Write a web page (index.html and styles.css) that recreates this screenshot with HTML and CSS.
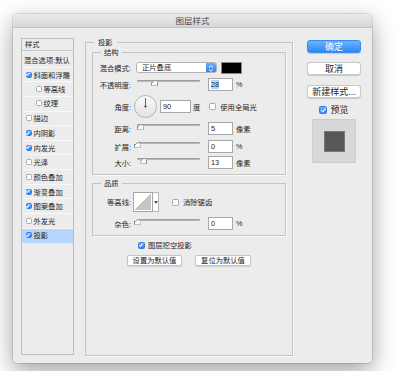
FILE: index.html
```html
<!DOCTYPE html>
<html lang="zh-CN">
<head>
  <meta charset="UTF-8">
  <title>图层样式</title>
  <link rel="stylesheet" href="styles.css">
</head>
<body>
  <div class="window">
    <div class="titlebar">图层样式</div>
    <div class="body">

      <!-- Style list -->
      <div class="list">
        <div class="list-head">样式</div>
        <div class="item item-first">混合选项:默认</div>
        <div class="item"><span class="cb on"></span>斜面和浮雕</div>
        <div class="item sub"><span class="cb"></span>等高线</div>
        <div class="item sub"><span class="cb"></span>纹理</div>
        <div class="item"><span class="cb"></span>描边</div>
        <div class="item"><span class="cb on"></span>内阴影</div>
        <div class="item"><span class="cb on"></span>内发光</div>
        <div class="item"><span class="cb"></span>光泽</div>
        <div class="item"><span class="cb"></span>颜色叠加</div>
        <div class="item"><span class="cb on"></span>渐变叠加</div>
        <div class="item"><span class="cb on"></span>图案叠加</div>
        <div class="item"><span class="cb"></span>外发光</div>
        <div class="item selected"><span class="cb on"></span>投影</div>
      </div>

      <!-- Drop shadow settings -->
      <fieldset class="group main">
        <legend>投影</legend>

        <fieldset class="group sub">
          <legend>结构</legend>
          <div class="row first">
            <span class="lbl">混合模式:</span>
            <div class="select">
              <span class="select-text">正片叠底</span>
              <span class="stepper">
                <svg width="10" height="11" viewBox="0 0 10 11"><path d="M3 4.5 L5 2.6 L7 4.5 M3 6.5 L5 8.4 L7 6.5" fill="none" stroke="#fff" stroke-width="1"/></svg>
              </span>
            </div>
            <span class="swatch"></span>
          </div>
          <div class="row">
            <span class="lbl">不透明度:</span>
            <div class="slider"><span class="thumb" style="left: 28%"></span></div>
            <span class="field"><span class="sel">28</span></span>
            <span class="unit">%</span>
          </div>
          <div class="row row-dial">
            <span class="lbl">角度:</span>
            <svg class="dial" width="23" height="23" viewBox="0 0 23 23">
              <defs>
                <linearGradient id="dialfill" x1="0" y1="0" x2="0" y2="1">
                  <stop offset="0" stop-color="#fbfbfb"/>
                  <stop offset="1" stop-color="#e2e2e2"/>
                </linearGradient>
              </defs>
              <circle cx="11.5" cy="11.5" r="11" fill="url(#dialfill)" stroke="#a3a3a3" stroke-width="0.8"/>
              <line x1="11.5" y1="11.5" x2="11.5" y2="3" stroke="#444" stroke-width="0.8"/>
              <circle cx="11.5" cy="11.5" r="1.1" fill="#333"/>
            </svg>
            <span class="field wide">90</span>
            <span class="unit unit-deg">度</span>
            <span class="cb big"></span>
            <span class="cb-label">使用全局光</span>
          </div>
          <div class="row">
            <span class="lbl">距离:</span>
            <div class="slider"><span class="thumb" style="left: 5%"></span></div>
            <span class="field">5</span>
            <span class="unit">像素</span>
          </div>
          <div class="row gap5">
            <span class="lbl">扩展:</span>
            <div class="slider"><span class="thumb" style="left: 0%"></span></div>
            <span class="field">0</span>
            <span class="unit">%</span>
          </div>
          <div class="row gap3">
            <span class="lbl">大小:</span>
            <div class="slider"><span class="thumb" style="left: 11%"></span></div>
            <span class="field">13</span>
            <span class="unit">像素</span>
          </div>
        </fieldset>

        <fieldset class="group sub quality">
          <legend>品质</legend>
          <div class="row first row-contour">
            <span class="lbl">等高线:</span>
            <div class="contour">
              <svg width="20" height="20" viewBox="0 0 20 20">
                <rect x="0.5" y="0.5" width="19" height="19" fill="#fff" stroke="#a6a6a6"/>
                <polygon points="2,18 18,2 18,18" fill="#c6c6c6"/>
                <line x1="2" y1="18" x2="18" y2="2" stroke="#9a9a9a" stroke-width="0.6"/>
              </svg>
              <span class="contour-drop">
                <svg width="4" height="3" viewBox="0 0 4 3"><polygon points="0,0 4,0 2,3" fill="#555"/></svg>
              </span>
            </div>
            <span class="cb big cb-anti"></span>
            <span class="cb-label">消除锯齿</span>
          </div>
          <div class="row gap5">
            <span class="lbl">杂色:</span>
            <div class="slider"><span class="thumb" style="left: 0%"></span></div>
            <span class="field">0</span>
            <span class="unit">%</span>
          </div>
        </fieldset>

        <div class="check-row">
          <span class="cb big on"></span>
          <span>图层挖空投影</span>
        </div>

        <div class="btn-row">
          <span class="small-btn">设置为默认值</span>
          <span class="small-btn wide-btn">复位为默认值</span>
        </div>
      </fieldset>

      <!-- Side buttons -->
      <div class="side">
        <div class="btn primary">确定</div>
        <div class="btn btn-cancel">取消</div>
        <div class="btn btn-new">新建样式...</div>
        <div class="preview-check">
          <span class="cb large on"></span>
          <span>预览</span>
        </div>
        <div class="preview">
          <div class="preview-square"></div>
        </div>
      </div>

    </div>
  </div>
</body>
</html>
```

FILE: styles.css
```css
/* General */
body {
  margin: 0;
  width: 417px;
  height: 371px;
  overflow: hidden;
  background: #fff;
  font-family: "Liberation Sans", "Noto Sans CJK SC", sans-serif;
  color: #252525;
}

.window {
  margin: 14px 0 0 13px;
  width: 359px;
  height: 349px;
  background: #ececec;
  border-radius: 4px;
  overflow: hidden;
  display: flex;
  flex-direction: column;
  box-shadow: 0 0 0 0.5px rgba(0, 0, 0, 0.22), 0 8px 24px rgba(0, 0, 0, 0.38);
}

.titlebar {
  height: 13px;
  border-bottom: 1px solid #c3c3c3;
  background: linear-gradient(#ebebeb, #d7d7d7);
  text-align: center;
  font-size: 8.5px;
  line-height: 14px;
  color: #4a4a4a;
}

.body {
  flex: 1;
  display: flex;
  align-items: flex-start;
  padding: 10px 11px 7px 8px;
}

/* Checkboxes */
.cb {
  flex: none;
  display: inline-flex;
  align-items: center;
  justify-content: center;
  width: 6px;
  height: 6px;
  box-sizing: border-box;
  border: 0.5px solid #a8a8a8;
  border-radius: 1.5px;
  background: #fff;
}

.cb.on {
  border-color: #2f7de6;
  background: linear-gradient(#69aafb, #2c82f6);
}

.cb.on::after {
  content: "";
  width: 1.2px;
  height: 2.6px;
  margin-top: -1px;
  border-right: 1px solid #fff;
  border-bottom: 1px solid #fff;
  transform: rotate(40deg);
}

.cb.big {
  width: 7px;
  height: 7px;
}

.cb.large {
  width: 8px;
  height: 8px;
}

.cb.large::after {
  width: 1.6px;
  height: 3.6px;
}

/* Style list */
.list {
  flex: none;
  width: 53px;
  height: 317px;
  box-sizing: border-box;
  border: 1px solid #bdbdbd;
  font-size: 7.3px;
}

.list-head {
  height: 11px;
  line-height: 11px;
  padding-left: 3px;
  border-bottom: 1px solid #c8c8c8;
}

.item {
  height: 14.64px;
  box-sizing: border-box;
  display: flex;
  align-items: center;
  gap: 2px;
  padding-left: 3.5px;
  border-bottom: 1px solid #f8f8f8;
  white-space: nowrap;
}

.item-first {
  height: 16.7px;
  padding-left: 2px;
  padding-top: 2px;
}

.item.sub {
  padding-left: 13.5px;
}

.item.selected {
  background: #b5d5fd;
  border-bottom-color: #b5d5fd;
}

/* Groups */
.group {
  margin: 0;
  min-width: 0;
  border: 1px solid #c4c4c4;
  box-shadow: 1px 1px 0 #f9f9f9;
}

.group legend {
  font-size: 7.3px;
  line-height: 9px;
  padding: 0 4px;
  margin-left: 2px;
}

.main {
  align-self: stretch;
  flex: none;
  width: 208px;
  box-sizing: border-box;
  margin-left: 11px;
  padding: 1px 6px 0 6px;
  font-size: 7.3px;
}

.sub {
  padding: 4px 0 5px 0;
}

.sub legend {
  margin-left: 8px;
  padding: 0 3px;
}

.quality {
  margin-top: 4px;
}

/* Rows */
.row {
  display: flex;
  align-items: center;
  height: 13px;
  margin-top: 4px;
  white-space: nowrap;
}

.row.first {
  margin-top: 0;
}

.row.gap5 {
  margin-top: 5px;
}

.row.gap3 {
  margin-top: 3px;
}

.row-dial {
  height: 23px;
}

.row-contour {
  height: 20px;
}

.lbl {
  flex: none;
  width: 38px;
  text-align: right;
}

/* Select */
.select {
  flex: none;
  display: flex;
  margin-left: 5px;
  width: 81px;
  height: 11px;
  box-sizing: border-box;
  border: 0.5px solid #b3b3b3;
  border-radius: 2.5px;
  background: #fff;
  overflow: hidden;
}

.select-text {
  flex: 1;
  padding-left: 5px;
  line-height: 10px;
}

.stepper {
  flex: none;
  width: 10px;
  display: flex;
  background: linear-gradient(#6aaefb, #2d82f5);
}

.swatch {
  flex: none;
  margin-left: 4px;
  width: 21px;
  height: 12px;
  box-sizing: border-box;
  border: 1px solid #8a8a8a;
  background: #000;
}

/* Sliders */
.slider {
  flex: none;
  position: relative;
  align-self: stretch;
  margin-left: 6px;
  width: 63px;
}

.slider::before {
  content: "";
  display: block;
  margin-top: 2px;
  height: 2px;
  border-radius: 1px;
  background: linear-gradient(#8f8f8f, #c4c4c4);
}

.thumb {
  position: absolute;
  top: 2.5px;
  width: 7px;
  height: 5px;
  margin-left: -3.5px;
  box-sizing: border-box;
  background: #fafafa;
  border: 0.8px solid #8c8c8c;
  border-top: none;
  clip-path: polygon(50% 0, 100% 40%, 100% 100%, 0 100%, 0 40%);
}

.thumb::before {
  content: "";
  display: block;
  height: 100%;
  background: linear-gradient(135deg, transparent 42%, #8c8c8c 42%, #8c8c8c 52%, transparent 52%),
              linear-gradient(225deg, transparent 42%, #8c8c8c 42%, #8c8c8c 52%, transparent 52%);
  background-size: 50% 45%;
  background-repeat: no-repeat;
  background-position: left top, right top;
}

/* Text fields */
.field {
  flex: none;
  margin-left: 8px;
  width: 25px;
  height: 13px;
  box-sizing: border-box;
  border: 1px solid #a8a8a8;
  background: #fff;
  padding-left: 2px;
  line-height: 11px;
}

.field.wide {
  margin-left: 3.5px;
  width: 31px;
}

.sel {
  background: #b3d5fd;
}

.unit {
  margin-left: 3px;
}

.unit-deg {
  margin-left: 2px;
}

.dial {
  flex: none;
  margin-left: 2.5px;
}

.row-dial .cb {
  margin-left: 9px;
}

.cb-label {
  margin-left: 4px;
}

/* Contour */
.contour {
  flex: none;
  display: flex;
  margin-left: 2px;
  height: 20px;
}

.contour-drop {
  width: 6px;
  box-sizing: border-box;
  border: 0.5px solid #b8b8b8;
  border-left: none;
  background: #fff;
  display: flex;
  align-items: center;
  justify-content: center;
}

.cb-anti {
  margin-left: 13px;
}

/* Bottom of the drop shadow panel */
.check-row {
  display: flex;
  align-items: center;
  gap: 3px;
  height: 10px;
  margin-top: 4px;
  padding-left: 46px;
}

.btn-row {
  display: flex;
  justify-content: center;
  gap: 13px;
  margin-top: 5px;
}

.small-btn {
  width: 55px;
  height: 11px;
  box-sizing: border-box;
  border: 0.5px solid #c6c6c6;
  border-radius: 2px;
  background: #fff;
  box-shadow: 0 0.5px 1px rgba(0, 0, 0, 0.12);
  text-align: center;
  line-height: 10.5px;
}

.small-btn.wide-btn {
  width: 56px;
}

/* Side column */
.side {
  flex: none;
  width: 54px;
  margin-left: 14px;
  display: flex;
  flex-direction: column;
  align-items: center;
}

.btn {
  width: 54px;
  height: 13px;
  box-sizing: border-box;
  border: 0.5px solid #c9c9c9;
  border-radius: 3px;
  background: #fff;
  box-shadow: 0 0.5px 1px rgba(0, 0, 0, 0.15);
  font-size: 9px;
  line-height: 12px;
  text-align: center;
  white-space: nowrap;
}

.btn.primary {
  margin-top: 2px;
  border-color: #3b8ce9;
  background: linear-gradient(#6db3fb, #2a87f6);
  color: #fff;
}

.btn-cancel {
  margin-top: 9px;
}

.btn-new {
  margin-top: 10px;
}

.preview-check {
  display: flex;
  align-items: center;
  gap: 3px;
  height: 9px;
  margin-top: 7px;
  font-size: 9px;
}

.preview {
  margin-top: 5px;
  width: 44px;
  height: 44px;
  box-sizing: border-box;
  border: 1px solid #cdcdcd;
  background: #d8d8d8;
  display: flex;
  align-items: center;
  justify-content: center;
}

.preview-square {
  width: 21px;
  height: 21px;
  box-sizing: border-box;
  border: 1px solid #777;
  background: #575757;
}
```
